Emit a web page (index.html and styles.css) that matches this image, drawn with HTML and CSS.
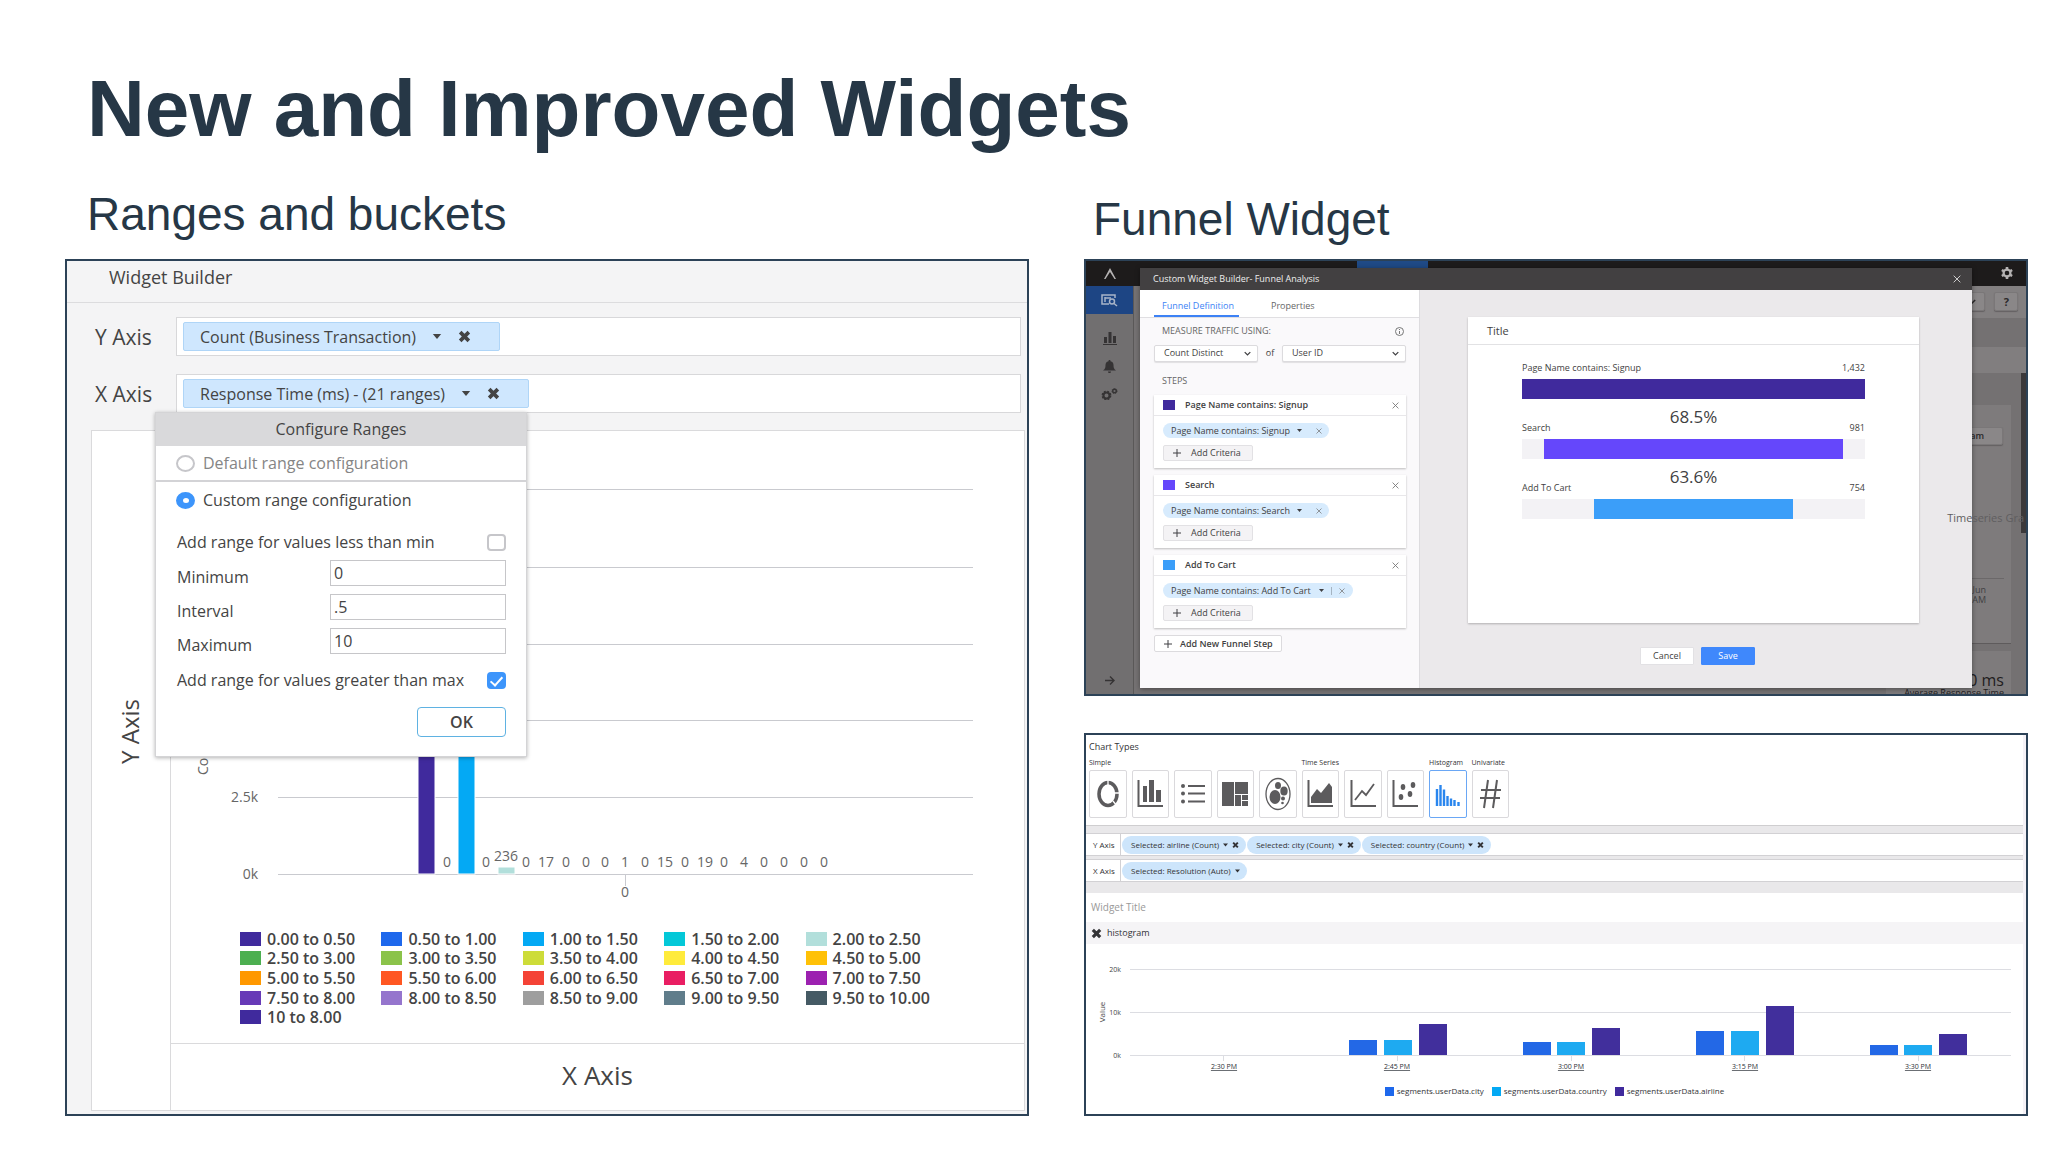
FILE: index.html
```html
<!DOCTYPE html>
<html lang="en">
<head>
  <meta charset="UTF-8">
  <meta name="viewport" content="width=device-width, initial-scale=1.0">
  <title>New and Improved Widgets</title>
  <link rel="stylesheet" href="styles.css">
</head>
<body>
  <!-- shared icons -->
  <svg class="sprite" width="0" height="0" aria-hidden="true">
    <symbol id="caret" viewBox="0 0 10 6"><path d="M0 0h10L5 6z" fill="currentColor"/></symbol>
    <symbol id="cross" viewBox="0 0 12 12"><path d="M2 2l8 8M10 2l-8 8" stroke="currentColor" stroke-width="3.4"/></symbol>
    <symbol id="thin-cross" viewBox="0 0 12 12"><path d="M1 1l10 10M11 1L1 11" stroke="currentColor" stroke-width="1.5"/></symbol>
    <symbol id="plus" viewBox="0 0 12 12"><path d="M6 0v12M0 6h12" stroke="currentColor" stroke-width="1.5"/></symbol>
    <symbol id="chevron" viewBox="0 0 10 6"><path d="M1 1l4 4 4-4" fill="none" stroke="currentColor" stroke-width="1.8"/></symbol>
    <symbol id="gear" viewBox="0 0 14 14"><circle cx="7" cy="7" r="4" fill="none" stroke="currentColor" stroke-width="2.6"/><path d="M7 0v3M7 11v3M1 3.500l2.600 1.500M10.400 9l2.600 1.500M1 10.500L3.600 9M10.400 5L13 3.500" stroke="currentColor" stroke-width="3"/></symbol>
  </svg>

  <main class="slide">
    <h1>New and Improved Widgets</h1>

    <div class="columns">
      <section class="column ranges">
        <h2>Ranges and buckets</h2>

        <div class="panel builder">
          <div class="builder-header">Widget Builder</div>
          <div class="axis-row">
            <span class="axis-label">Y Axis</span>
            <div class="axis-field">
              <div class="tag">Count (Business Transaction)
                <button class="icon-button" aria-label="Options"><svg class="caret"><use href="#caret"/></svg></button>
                <button class="icon-button" aria-label="Remove"><svg class="cross"><use href="#cross"/></svg></button>
              </div>
            </div>
          </div>
          <div class="axis-row">
            <span class="axis-label">X Axis</span>
            <div class="axis-field">
              <div class="tag">Response Time (ms) - (21 ranges)
                <button class="icon-button" aria-label="Options"><svg class="caret"><use href="#caret"/></svg></button>
                <button class="icon-button" aria-label="Remove"><svg class="cross"><use href="#cross"/></svg></button>
              </div>

              <form class="popup">
                <div class="popup-title">Configure Ranges</div>
                <div class="popup-option muted">
                  <input type="radio" name="range" id="range-default">
                  <label for="range-default">Default range configuration</label>
                </div>
                <div class="popup-option custom">
                  <input type="radio" name="range" id="range-custom" checked>
                  <label for="range-custom">Custom range configuration</label>
                </div>
                <div class="popup-fields">
                  <div class="popup-line">
                    <label for="less-min">Add range for values less than min</label>
                    <input type="checkbox" id="less-min">
                  </div>
                  <div class="popup-input">
                    <label for="minimum">Minimum</label>
                    <input type="text" id="minimum" value="0">
                  </div>
                  <div class="popup-input">
                    <label for="interval">Interval</label>
                    <input type="text" id="interval" value=".5">
                  </div>
                  <div class="popup-input">
                    <label for="maximum">Maximum</label>
                    <input type="text" id="maximum" value="10">
                  </div>
                  <div class="popup-line last">
                    <label for="greater-max">Add range for values greater than max</label>
                    <input type="checkbox" id="greater-max" checked>
                  </div>
                  <button type="button" class="ok-button">OK</button>
                </div>
              </form>
            </div>
          </div>

          <div class="chart-box">
            <div class="y-title"><span>Y Axis</span></div>
            <div class="chart-main">
              <svg class="range-chart" viewBox="0 0 853 494">
                <path class="grid-line" d="M107 58.500h695M107 136.500h695M107 213.500h695M107 289.500h695M107 366.500h695M107 443.500h695M454.500 444v11"/>
                <g class="bars">
                  <rect x="247" y="80" width="17" height="363" fill="#402a9d"/>
                  <rect x="287" y="80" width="17" height="363" fill="#04a9f4"/>
                  <rect x="327" y="436" width="17" height="7" fill="#b2dfdb"/>
                </g>
                <text x="87" y="371" text-anchor="end">2.5k</text>
                <text x="87" y="448" text-anchor="end">0k</text>
                <text transform="translate(37 344) rotate(-90)">Count</text>
                <g text-anchor="middle">
                  <text x="276" y="436">0</text>
                  <text x="315" y="436">0</text>
                  <text x="335" y="430">236</text>
                  <text x="355" y="436">0</text>
                  <text x="375" y="436">17</text>
                  <text x="395" y="436">0</text>
                  <text x="415" y="436">0</text>
                  <text x="434" y="436">0</text>
                  <text x="454" y="436">1</text>
                  <text x="474" y="436">0</text>
                  <text x="494" y="436">15</text>
                  <text x="514" y="436">0</text>
                  <text x="534" y="436">19</text>
                  <text x="553" y="436">0</text>
                  <text x="573" y="436">4</text>
                  <text x="593" y="436">0</text>
                  <text x="613" y="436">0</text>
                  <text x="633" y="436">0</text>
                  <text x="653" y="436">0</text>
                  <text x="454" y="466">0</text>
                </g>
              </svg>
              <ul class="range-legend">
                <li><i class="c-indigo"></i>0.00 to 0.50</li>
                <li><i class="c-blue"></i>0.50 to 1.00</li>
                <li><i class="c-sky"></i>1.00 to 1.50</li>
                <li><i class="c-cyan"></i>1.50 to 2.00</li>
                <li><i class="c-mint"></i>2.00 to 2.50</li>
                <li><i class="c-green"></i>2.50 to 3.00</li>
                <li><i class="c-light-green"></i>3.00 to 3.50</li>
                <li><i class="c-lime"></i>3.50 to 4.00</li>
                <li><i class="c-yellow"></i>4.00 to 4.50</li>
                <li><i class="c-amber"></i>4.50 to 5.00</li>
                <li><i class="c-orange"></i>5.00 to 5.50</li>
                <li><i class="c-deep-orange"></i>5.50 to 6.00</li>
                <li><i class="c-red"></i>6.00 to 6.50</li>
                <li><i class="c-pink"></i>6.50 to 7.00</li>
                <li><i class="c-purple"></i>7.00 to 7.50</li>
                <li><i class="c-violet"></i>7.50 to 8.00</li>
                <li><i class="c-lilac"></i>8.00 to 8.50</li>
                <li><i class="c-gray"></i>8.50 to 9.00</li>
                <li><i class="c-slate"></i>9.00 to 9.50</li>
                <li><i class="c-dark-slate"></i>9.50 to 10.00</li>
                <li><i class="c-indigo"></i>10 to 8.00</li>
              </ul>
              <div class="x-title"><span>X Axis</span></div>
            </div>
          </div>
        </div>
      </section>

      <section class="column funnel">
        <h2>Funnel Widget</h2>

        <div class="panel screen">
          <div class="app">
            <div class="app-bar">
              <svg class="logo" viewBox="0 0 14 12"><path d="M7 0l6 11-1.500 0L7 4 2.500 11H1z" fill="#b5b3b3"/></svg>
              <span class="app-tab"></span>
              <svg class="app-gear"><use href="#gear"/></svg>
            </div>
            <div class="app-body">
              <nav class="side">
                <a href="#" class="side-item active" aria-label="Explore">
                  <svg width="18" height="13" viewBox="0 0 18 13"><path d="M8 10H1V1h13v3M4 3v5M4 4h6" fill="none" stroke="currentColor" stroke-width="1.500"/><circle cx="11" cy="7.500" r="2.500" fill="none" stroke="currentColor" stroke-width="1.500"/><path d="M13 9.500l3 2.500" stroke="currentColor" stroke-width="1.500"/></svg>
                </a>
                <a href="#" class="side-item" aria-label="Dashboards">
                  <svg width="14" height="13" viewBox="0 0 14 13"><path d="M1 5h3v6H1zM5.500 0h3v11h-3zM10 4h3v7h-3zM0 12h14v1H0z" fill="currentColor"/></svg>
                </a>
                <a href="#" class="side-item" aria-label="Alerts">
                  <svg width="13" height="13" viewBox="0 0 13 13"><path d="M6.500 0c.8 0 1 .5 1 1.200C9.500 1.600 10.500 3 10.500 5c0 3 .5 4 2.500 5.500H0C2 9 2.500 8 2.500 5c0-2 1-3.400 3-3.800 0-.7.2-1.200 1-1.200zM5 11.500h3c0 1-.7 1.500-1.500 1.500S5 12.500 5 11.500z" fill="currentColor"/></svg>
                </a>
                <a href="#" class="side-item" aria-label="Settings">
                  <svg width="17" height="12" viewBox="0 0 17 12"><circle cx="5.500" cy="7.500" r="3" fill="none" stroke="currentColor" stroke-width="2"/><circle cx="5.500" cy="7.500" r="4.300" fill="none" stroke="currentColor" stroke-width="1.200" stroke-dasharray="2 1.400"/><circle cx="13.500" cy="3" r="1.800" fill="none" stroke="currentColor" stroke-width="1.400"/><circle cx="13.500" cy="3" r="2.600" fill="none" stroke="currentColor" stroke-width=".8" stroke-dasharray="1.200 1"/></svg>
                </a>
                <a href="#" class="side-item bottom" aria-label="Expand">
                  <svg width="10" height="9" viewBox="0 0 10 9"><path d="M0 4.500h9M5 .5l4 4-4 4" fill="none" stroke="currentColor" stroke-width="1.400"/></svg>
                </a>
              </nav>
              <div class="page">
                <div class="page-tools">
                  <button class="page-button" aria-label="More"><svg class="chevron"><use href="#chevron"/></svg></button>
                  <button class="page-button help">?</button>
                </div>
                <div class="page-strip"></div>
                <div class="page-strip light"></div>
                <div class="page-cards">
                  <div class="page-card top"><button class="page-button wide">am</button></div>
                  <div class="page-card middle"><div class="page-date">Jun<br>AM</div></div>
                  <div class="page-card metric"><b>0 ms</b><span>Average Response Time</span></div>
                  <span class="scrollbar"></span>
                </div>
              </div>
            </div>
          </div>

          <div class="modal">
            <div class="modal-header">
              <span>Custom Widget Builder- Funnel Analysis</span>
              <button class="icon-button" aria-label="Close"><svg class="close"><use href="#thin-cross"/></svg></button>
            </div>
            <div class="modal-body">
              <div class="definition">
                <div class="tabs">
                  <a href="#" class="tab active">Funnel Definition</a>
                  <a href="#" class="tab">Properties</a>
                </div>
                <div class="definition-body">
                  <div class="caption">
                    <span>MEASURE TRAFFIC USING:</span>
                    <svg width="9" height="9" viewBox="0 0 9 9"><circle cx="4.500" cy="4.500" r="4" fill="none" stroke="#777"/><path d="M4.500 2v1M4.500 4v3" stroke="#777"/></svg>
                  </div>
                  <div class="measure">
                    <span class="select count"><select aria-label="Measure"><option>Count Distinct</option></select><svg class="chevron"><use href="#chevron"/></svg></span>
                    <span>of</span>
                    <span class="select user"><select aria-label="Field"><option>User ID</option></select><svg class="chevron"><use href="#chevron"/></svg></span>
                  </div>
                  <div class="caption steps">STEPS</div>

                  <div class="step">
                    <div class="step-head">
                      <i class="c-indigo"></i><span>Page Name contains: Signup</span>
                      <button class="icon-button" aria-label="Remove step"><svg class="close"><use href="#thin-cross"/></svg></button>
                    </div>
                    <div class="step-body">
                      <div class="pill">Page Name contains: Signup
                        <svg class="caret"><use href="#caret"/></svg><span class="bar"></span><svg class="close"><use href="#thin-cross"/></svg>
                      </div>
                      <button class="add"><svg class="plus"><use href="#plus"/></svg>Add Criteria</button>
                    </div>
                  </div>
                  <div class="step">
                    <div class="step-head">
                      <i class="c-iris"></i><span>Search</span>
                      <button class="icon-button" aria-label="Remove step"><svg class="close"><use href="#thin-cross"/></svg></button>
                    </div>
                    <div class="step-body">
                      <div class="pill">Page Name contains: Search
                        <svg class="caret"><use href="#caret"/></svg><span class="bar"></span><svg class="close"><use href="#thin-cross"/></svg>
                      </div>
                      <button class="add"><svg class="plus"><use href="#plus"/></svg>Add Criteria</button>
                    </div>
                  </div>
                  <div class="step">
                    <div class="step-head">
                      <i class="c-azure"></i><span>Add To Cart</span>
                      <button class="icon-button" aria-label="Remove step"><svg class="close"><use href="#thin-cross"/></svg></button>
                    </div>
                    <div class="step-body">
                      <div class="pill long">Page Name contains: Add To Cart
                        <svg class="caret"><use href="#caret"/></svg><span class="bar"></span><svg class="close"><use href="#thin-cross"/></svg>
                      </div>
                      <button class="add"><svg class="plus"><use href="#plus"/></svg>Add Criteria</button>
                    </div>
                  </div>
                  <button class="add new"><svg class="plus"><use href="#plus"/></svg>Add New Funnel Step</button>
                </div>
              </div>

              <div class="preview">
                <div class="preview-card">
                  <div class="preview-title">Title</div>
                  <div class="funnel-chart">
                    <div class="funnel-row first"><span>Page Name contains: Signup</span><b></b><span class="value">1,432</span></div>
                    <div class="track"><div class="fill c-indigo" style="width: 100%"></div></div>
                    <div class="funnel-row"><span>Search</span><b>68.5%</b><span class="value">981</span></div>
                    <div class="track"><div class="fill c-iris" style="width: 87%"></div></div>
                    <div class="funnel-row"><span>Add To Cart</span><b>63.6%</b><span class="value">754</span></div>
                    <div class="track"><div class="fill c-azure" style="width: 58%"></div></div>
                  </div>
                </div>
                <div class="actions">
                  <button class="cancel">Cancel</button>
                  <button class="save">Save</button>
                </div>
              </div>
            </div>
          </div>
          <span class="ghost">Timeseries Gra</span>
        </div>

        <div class="panel histogram">
          <div class="types">
            <div class="types-title">Chart Types</div>
            <div class="types-grid">
              <span class="group six">Simple</span>
              <span class="group three">Time Series</span>
              <span class="group">Histogram</span>
              <span class="group">Univariate</span>
              <button class="type" aria-label="Donut"><svg viewBox="0 0 28 36"><ellipse cx="14" cy="18" rx="9" ry="11.500" fill="none" stroke="currentColor" stroke-width="3.500"/><path d="M14 2v7M20 17h6M19 25l4 5" stroke="#fff" stroke-width="1.300"/></svg></button>
              <button class="type" aria-label="Bar"><svg viewBox="0 0 28 36"><path d="M2.500 4v26H27" fill="none" stroke="currentColor" stroke-width="2"/><path d="M7 10h4v16H7zM13 4h5v22h-5zM20 14h5v12h-5z" fill="currentColor"/></svg></button>
              <button class="type" aria-label="List"><svg viewBox="0 0 28 36"><path d="M9 10h17M9 17.500h17M9 25.500h17" stroke="currentColor" stroke-width="2.200"/><circle cx="4" cy="10" r="2" fill="currentColor"/><circle cx="4" cy="17.500" r="2" fill="currentColor"/><circle cx="4" cy="25.500" r="2" fill="currentColor"/></svg></button>
              <button class="type" aria-label="Tree map"><svg viewBox="0 0 28 36"><path d="M1 6h12v24H1zM14 6h13v12H14zM14 19h6v11h-6zM21 19h6v5h-6zM21 25h6v5h-6z" fill="currentColor"/></svg></button>
              <button class="type" aria-label="Bubble"><svg viewBox="0 0 28 36"><ellipse cx="14" cy="18" rx="12" ry="15.500" fill="none" stroke="currentColor" stroke-width="1.300"/><g fill="currentColor"><ellipse cx="11" cy="21" rx="5.500" ry="7"/><ellipse cx="14" cy="9.500" rx="3" ry="3.500"/><ellipse cx="20" cy="15" rx="3.700" ry="4.500"/><circle cx="19" cy="22.500" r="2"/><circle cx="18.500" cy="27" r="1.300"/></g></svg></button>
              <button class="type" aria-label="Area"><svg viewBox="0 0 28 36"><path d="M2.500 4v26H27" fill="none" stroke="currentColor" stroke-width="2"/><path d="M5 27v-6l6-8 4 4 8-10 3 4v16z" fill="currentColor"/></svg></button>
              <button class="type" aria-label="Line"><svg viewBox="0 0 28 36"><path d="M2.500 4v26H27" fill="none" stroke="currentColor" stroke-width="2"/><path d="M6 24l7-9 4 4 8-11" fill="none" stroke="currentColor" stroke-width="1.800"/></svg></button>
              <button class="type" aria-label="Scatter"><svg viewBox="0 0 28 36"><path d="M2.500 4v26H27" fill="none" stroke="currentColor" stroke-width="2"/><g fill="currentColor"><ellipse cx="12" cy="11" rx="2.300" ry="3"/><ellipse cx="22" cy="9" rx="2.300" ry="3"/><ellipse cx="19" cy="18" rx="2.300" ry="3"/><ellipse cx="10" cy="21" rx="2.300" ry="3"/></g></svg></button>
              <button class="type active" aria-label="Histogram"><svg viewBox="0 0 28 36"><path d="M3 13v17M6.500 9v21M10 13.500v16.500M13.500 20v10M17 22.500v7.500M20.500 24v6M24.500 26v4" stroke="currentColor" stroke-width="2.400"/></svg></button>
              <button class="type" aria-label="Numeric"><svg viewBox="0 0 28 36"><path d="M12 4L8 32M21 4l-4 28M5 14h20M4 22h20" stroke="currentColor" stroke-width="2"/></svg></button>
            </div>
          </div>

          <div class="query">
            <div class="query-row">
              <span class="query-label">Y Axis</span>
              <div class="query-chip">Selected: airline (Count) <svg class="caret"><use href="#caret"/></svg><svg class="cross"><use href="#cross"/></svg></div>
              <div class="query-chip">Selected: city (Count) <svg class="caret"><use href="#caret"/></svg><svg class="cross"><use href="#cross"/></svg></div>
              <div class="query-chip">Selected: country (Count) <svg class="caret"><use href="#caret"/></svg><svg class="cross"><use href="#cross"/></svg></div>
            </div>
            <div class="query-row">
              <span class="query-label">X Axis</span>
              <div class="query-chip">Selected: Resolution (Auto) <svg class="caret"><use href="#caret"/></svg></div>
            </div>
          </div>

          <div class="widget-title">Widget Title</div>
          <div class="widget-name"><svg class="cross"><use href="#cross"/></svg>histogram</div>

          <svg class="histogram-chart" viewBox="0 0 940 134">
            <path class="grid-line" d="M44 25.500h881M44 68.500h881M44 111.500h881M137.500 112v5M311.500 112v5M485.500 112v5M658.500 112v5M832.500 112v5"/>
            <g fill="#2368e6">
              <rect x="263" y="96" width="28" height="15"/>
              <rect x="437" y="98" width="28" height="13"/>
              <rect x="610" y="87" width="28" height="24"/>
              <rect x="784" y="101" width="28" height="10"/>
            </g>
            <g fill="#1eaaf1">
              <rect x="298" y="96" width="28" height="15"/>
              <rect x="471" y="98" width="28" height="13"/>
              <rect x="645" y="87" width="28" height="24"/>
              <rect x="818" y="101" width="28" height="10"/>
            </g>
            <g fill="#412f9c">
              <rect x="333" y="80" width="28" height="31"/>
              <rect x="506" y="84" width="28" height="27"/>
              <rect x="680" y="62" width="28" height="49"/>
              <rect x="853" y="90" width="28" height="21"/>
            </g>
            <g text-anchor="end">
              <text x="35" y="28">20k</text>
              <text x="35" y="71">10k</text>
              <text x="35" y="114">0k</text>
            </g>
            <text class="value-title" text-anchor="middle" transform="translate(19 68) rotate(-90)">Value</text>
            <g class="times" text-anchor="middle">
              <text x="138" y="125">2:30 PM</text>
              <text x="311" y="125">2:45 PM</text>
              <text x="485" y="125">3:00 PM</text>
              <text x="659" y="125">3:15 PM</text>
              <text x="832" y="125">3:30 PM</text>
            </g>
          </svg>
          <ul class="histogram-legend">
            <li><i class="c-blue"></i>segments.userData.city</li>
            <li><i class="c-sky"></i>segments.userData.country</li>
            <li><i class="c-indigo"></i>segments.userData.airline</li>
          </ul>
        </div>
      </section>
    </div>
  </main>
</body>
</html>
```
FILE: styles.css
```css
* {
  box-sizing: border-box;
}

body {
  margin: 0;
  background: #fff;
  color: #263746;
  font-family: "Open Sans", sans-serif;
}

button,
input,
select {
  font: inherit;
  color: inherit;
  margin: 0;
}

ul {
  list-style: none;
  margin: 0;
  padding: 0;
}

svg {
  display: block;
  flex: none;
}

.sprite {
  position: absolute;
}

.slide {
  padding: 63px 20px 36px 65px;
}

h1,
h2 {
  font-family: "Liberation Sans", Arial, sans-serif;
  color: #263746;
}

h1 {
  margin: 0 0 0 22px;
  font-size: 80px;
  line-height: 92px;
}

h2 {
  font-size: 46px;
  font-weight: normal;
  line-height: 52px;
}

.ranges h2 {
  margin: 33px 0 19px 22px;
}

.funnel h2 {
  margin: 38px 0 14px 9px;
}

.columns {
  display: grid;
  grid-template-columns: 964fr 944fr;
  gap: 55px;
}

.panel {
  border: 2px solid #2c4257;
}

.icon-button {
  display: flex;
  padding: 0;
  border: 0;
  background: none;
}

/* swatch colours */
.c-indigo { background: #402a9d; }
.c-blue { background: #1e68ec; }
.c-sky { background: #04a9f4; }
.c-cyan { background: #04c8d8; }
.c-mint { background: #b2dfdb; }
.c-green { background: #4caf50; }
.c-light-green { background: #8bc34a; }
.c-lime { background: #cddc39; }
.c-yellow { background: #ffeb3b; }
.c-amber { background: #ffc107; }
.c-orange { background: #ff9800; }
.c-deep-orange { background: #ff5722; }
.c-red { background: #f44336; }
.c-pink { background: #e91e63; }
.c-purple { background: #9c21b0; }
.c-violet { background: #673ab7; }
.c-lilac { background: #9575cd; }
.c-gray { background: #9e9e9e; }
.c-slate { background: #607d8b; }
.c-dark-slate { background: #455a64; }
.c-iris { background: #6547fb; }
.c-azure { background: #3b9ef9; }

/* widget builder */
.builder {
  background: #f4f4f5;
  color: #444;
  font-size: 16px;
  padding-bottom: 3px;
}

.builder-header {
  height: 42px;
  padding-left: 42px;
  margin-bottom: 14px;
  border-bottom: 1px solid #dcdcde;
  font-size: 18px;
  line-height: 32px;
}

.axis-row {
  display: flex;
  align-items: center;
  padding: 0 6px 0 28px;
  margin-bottom: 18px;
}

.axis-label {
  width: 81px;
  font-size: 21px;
  line-height: 28px;
}

.axis-field {
  position: relative;
  flex: 1;
  display: flex;
  padding: 4px 6px;
  height: 39px;
  border: 1px solid #d8d8da;
  background: #fff;
}

.tag {
  display: flex;
  align-items: center;
  gap: 16px;
  padding: 0 28px 0 16px;
  border: 1px solid #afd5f7;
  border-radius: 2px;
  background: #cfe7fe;
  line-height: 28px;
}

.tag .caret {
  width: 10px;
  height: 5px;
}

.tag .cross {
  width: 13px;
  height: 13px;
}

.popup {
  position: absolute;
  z-index: 2;
  top: 37px;
  left: -22px;
  width: 372px;
  background: #fff;
  border: 1px solid #d4d4d6;
  box-shadow: 0 1px 4px rgba(0, 0, 0, .3);
}

.popup-title {
  background: #d9d9db;
  line-height: 33px;
  text-align: center;
}

.popup-option {
  display: flex;
  align-items: center;
  gap: 8px;
  height: 36px;
  padding-left: 20px;
}

.muted {
  color: #858585;
  border-bottom: 2px solid #d3d3d6;
}

.popup input[type="radio"],
.popup input[type="checkbox"] {
  appearance: none;
  flex: none;
  display: grid;
  place-items: center;
  width: 19px;
  height: 17px;
  border: 2px solid #c6c6ca;
  background: #fff;
}

.popup input[type="radio"] {
  border-radius: 50%;
}

.popup input[type="checkbox"] {
  border-radius: 4px;
}

.popup input[type="radio"]:checked,
.popup input[type="checkbox"]:checked {
  border-color: #3d95fb;
  background: #3d95fb;
}

.popup input[type="radio"]:checked::after {
  content: "";
  width: 6px;
  height: 5px;
  border-radius: 50%;
  background: #fff;
}

.popup input[type="checkbox"]:checked::after {
  content: "";
  width: 5px;
  height: 10px;
  margin-bottom: 3px;
  border: solid #fff;
  border-width: 0 2px 2px 0;
  transform: rotate(42deg);
}

.popup-fields {
  padding: 11px 20px 19px 21px;
}

.popup-line {
  display: flex;
  align-items: center;
  justify-content: space-between;
  height: 26px;
  margin-bottom: 5px;
}

.popup-input {
  display: flex;
  justify-content: space-between;
  height: 26px;
  margin-bottom: 8px;
}

.popup-input label {
  line-height: 34px;
}

.popup-input input {
  width: 176px;
  padding: 0 3px;
  border: 1px solid #c6c6c9;
}

.popup-line.last {
  margin: 13px 0 14px;
}

.ok-button {
  display: block;
  width: 89px;
  height: 30px;
  margin-left: auto;
  border: 1px solid #5fb2e2;
  border-radius: 4px;
  background: #fff;
  font-weight: 600;
  line-height: 26px;
}

.chart-box {
  display: flex;
  margin: -1px 2px 0 24px;
  border: 1px solid #dadadc;
  background: #fff;
}

.y-title {
  display: grid;
  place-items: center;
  width: 79px;
  padding-right: 3px;
  border-right: 1px solid #dadadc;
  font-size: 24px;
}

.y-title span {
  writing-mode: vertical-rl;
  transform: rotate(180deg);
  margin-bottom: 78px;
}

.chart-main {
  flex: 1;
}

.range-chart {
  width: 100%;
  height: auto;
  font-size: 14px;
  fill: #666;
}

.grid-line {
  fill: none;
  stroke: #c9cacf;
}

.bars rect {
  stroke: #fff;
}

.range-legend {
  display: grid;
  grid-template-columns: repeat(5, 1fr);
  grid-template-rows: repeat(5, 1fr);
  height: 118px;
  padding: 4px 77px 16px 69px;
  font-weight: 600;
  line-height: 18px;
}

.range-legend li {
  display: flex;
  align-items: center;
  gap: 6px;
}

.range-legend i {
  width: 21px;
  height: 14px;
}

.x-title {
  height: 67px;
  border-top: 1px solid #dadadc;
  font-size: 26px;
  line-height: 62px;
  text-align: center;
}

/* funnel screen */
.screen {
  position: relative;
  display: grid;
  overflow: hidden;
  margin-bottom: 37px;
  font-size: 9px;
  line-height: 14px;
  color: #3f3f42;
  background: #757273;
}

.app,
.modal {
  grid-area: 1 / 1;
}

.app {
  display: flex;
  flex-direction: column;
}

.app-bar {
  display: flex;
  justify-content: space-between;
  align-items: flex-start;
  height: 25px;
  padding: 0 13px 0 17px;
  background: #1d1b1b;
}

.logo {
  width: 14px;
  height: 12px;
  margin-top: 7px;
}

.app-tab {
  width: 71px;
  height: 25px;
  margin-right: 344px;
  margin-left: 11px;
  background: #1f4a86;
}

.app-gear {
  width: 12px;
  height: 12px;
  margin-top: 6px;
  color: #b5b3b3;
}

.app-body {
  flex: 1;
  display: flex;
  justify-content: space-between;
}

.side {
  display: flex;
  flex-direction: column;
  width: 48px;
  border-right: 1px solid #5a5858;
  background: #716f70;
}

.side-item {
  display: grid;
  place-items: center;
  height: 28px;
  color: #353334;
}

.side-item.active {
  margin-bottom: 10px;
  background: #1d4584;
  color: #a8b4c8;
}

.side-item.bottom {
  margin: auto 0 0;
}

.page {
  display: flex;
  flex-direction: column;
  width: 140px;
}

.page-tools {
  display: flex;
  justify-content: flex-end;
  gap: 9px;
  height: 32px;
  padding: 6px 8px 0 0;
  background: #827f80;
}

.page-button {
  display: flex;
  align-items: center;
  justify-content: flex-end;
  width: 24px;
  height: 19px;
  padding: 0 8px;
  border: 1px solid #7a7778;
  border-radius: 2px;
  background: #8a8788;
  box-shadow: 0 1px 1px #646162;
  color: #2b292a;
}

.page-button .chevron {
  width: 8px;
  height: 5px;
}

.page-button.help {
  font-size: 11px;
  font-weight: 700;
}

.page-button.wide {
  width: 60px;
  height: 18px;
  padding: 0 18px;
  font-weight: 600;
}

.page-strip {
  height: 29px;
  background: #747172;
}

.page-strip.light {
  height: 26px;
  background: #817e7f;
}

.page-cards {
  position: relative;
  flex: 1;
  display: flex;
  flex-direction: column;
  gap: 7px;
  padding: 32px 15px 0 0;
  background: #747172;
}

.page-card {
  background: #7e7b7c;
}

.page-card.top {
  display: flex;
  justify-content: flex-end;
  height: 54px;
  padding: 22px 8px 0 0;
}

.page-card.middle {
  height: 185px;
  margin-top: -7px;
  border-bottom: 1px solid #5e5b5c;
  padding: 119px 7px 0 0;
}

.page-date {
  border-top: 1px solid #6b6869;
  padding: 6px 18px 0 0;
  line-height: 10px;
  text-align: right;
}

.page-card.metric {
  display: flex;
  flex-direction: column;
  align-items: flex-end;
  height: 43px;
  padding: 20px 7px 0 0;
  color: #1f1d1e;
}

.metric b {
  font-size: 16px;
  font-weight: 400;
  line-height: 18px;
}

.metric span {
  line-height: 8px;
  white-space: nowrap;
}

.scrollbar {
  position: absolute;
  top: 0;
  right: 0;
  width: 5px;
  height: 160px;
  background: #3c393a;
}

.ghost {
  position: absolute;
  top: 250px;
  right: 2px;
  font-size: 11px;
  white-space: nowrap;
  color: #605e60;
}

.modal {
  position: relative;
  display: flex;
  flex-direction: column;
  margin: 7px 54px 6px;
  box-shadow: 0 1px 5px rgba(0, 0, 0, .4);
}

.modal-header {
  display: flex;
  align-items: center;
  justify-content: space-between;
  height: 22px;
  padding: 0 11px 0 13px;
  background: #424041;
  color: #eee;
}

.close {
  width: 7px;
  height: 7px;
  color: #777;
}

.modal-header .close {
  width: 8px;
  height: 8px;
  color: #ccc;
}

.modal-body {
  flex: 1;
  display: flex;
}

.definition {
  width: 280px;
  border-right: 1px solid #dddcdf;
  background: #faf9fb;
}

.tabs {
  display: flex;
  gap: 24px;
  height: 28px;
  padding-left: 14px;
  border-bottom: 1px solid #e0dfe2;
  background: #fff;
}

.tab {
  padding: 0 8px;
  line-height: 31px;
  color: #666;
  text-decoration: none;
}

.tab.active {
  padding: 0 5px 0 8px;
  border-bottom: 2px solid #3d82f5;
  color: #3d82f5;
}

.definition-body {
  padding: 5px 13px 34px 14px;
}

.caption {
  display: flex;
  align-items: center;
  justify-content: space-between;
  height: 16px;
  margin-bottom: 6px;
  padding: 0 2px 0 8px;
  color: #666;
}

.measure {
  display: flex;
  justify-content: space-between;
  align-items: center;
  height: 16px;
  margin-bottom: 12px;
}

.select {
  display: grid;
  align-items: center;
}

.select.count {
  width: 104px;
}

.select.user {
  width: 124px;
}

.select select {
  grid-area: 1 / 1;
  appearance: none;
  height: 17px;
  padding: 0 9px;
  border: 1px solid #dcdbde;
  border-radius: 2px;
  background: #fff;
  box-shadow: 0 1px 1px rgba(0, 0, 0, .1);
}

.select .chevron {
  grid-area: 1 / 1;
  justify-self: end;
  width: 7px;
  height: 5px;
  margin-right: 7px;
  pointer-events: none;
}

.step {
  margin-bottom: 7px;
  background: #fff;
  box-shadow: 0 1px 2px rgba(0, 0, 0, .25);
}

.step-head {
  display: flex;
  align-items: center;
  gap: 10px;
  height: 21px;
  padding: 0 7px 0 9px;
  border-bottom: 1px solid #e8e7ea;
  font-weight: 600;
}

.step-head i {
  width: 12px;
  height: 10px;
}

.step-head .icon-button {
  margin-left: auto;
}

.step-body {
  padding: 7px 9px;
}

.pill {
  display: flex;
  align-items: center;
  gap: 7px;
  width: 166px;
  height: 15px;
  margin-bottom: 7px;
  padding: 0 8px;
  border-radius: 8px;
  background: #d7ebfd;
  white-space: nowrap;
}

.pill.long {
  width: 190px;
}

.pill .caret {
  width: 5px;
  height: 3px;
  margin-left: auto;
}

.pill .bar {
  width: 1px;
  height: 8px;
  background: #a5b4c2;
}

.pill .close {
  width: 6px;
  height: 6px;
}

.add {
  display: flex;
  align-items: center;
  gap: 10px;
  height: 16px;
  padding: 0 11px 0 9px;
  border: 1px solid #e2e1e4;
  border-radius: 2px;
  background: #f4f3f5;
}

.add.new {
  gap: 8px;
  height: 17px;
  padding: 0 8px 0 9px;
  border-color: #dcdbde;
  background: #fff;
  font-weight: 600;
}

.plus {
  width: 8px;
  height: 8px;
}

.preview {
  flex: 1;
  padding: 27px 53px 0 48px;
  background: #ebe9eb;
}

.preview-card {
  height: 306px;
  background: #fff;
  box-shadow: 0 1px 2px rgba(0, 0, 0, .25);
}

.preview-title {
  height: 28px;
  padding-left: 19px;
  border-bottom: 1px solid #e2e2e4;
  font-size: 11px;
  line-height: 27px;
}

.funnel-chart {
  padding: 0 54px;
}

.funnel-row {
  display: grid;
  grid-template-columns: 1fr auto 1fr;
  align-items: end;
  height: 40px;
  padding-bottom: 4px;
}

.funnel-row.first {
  height: 34px;
}

.funnel-row b {
  align-self: start;
  padding-top: 8px;
  font-size: 17px;
  font-weight: 400;
  line-height: 20px;
}

.value {
  text-align: right;
}

.track {
  background: #f3f2f5;
}

.fill {
  height: 20px;
  margin: 0 auto;
}

.actions {
  display: flex;
  justify-content: center;
  gap: 7px;
  padding: 24px 0 0 8px;
}

.cancel,
.save {
  width: 54px;
  height: 18px;
  padding: 0;
  border: 1px solid #e2e1e4;
  border-radius: 1px;
  background: #fff;
  line-height: 14px;
}

.save {
  border-color: #3f88fc;
  background: #3f88fc;
  color: #fff;
}

/* histogram panel */
.histogram {
  padding-right: 3px;
  background: linear-gradient(#f5f2f7, #f5f2f7) right / 3px 100% no-repeat #fff;
  color: #333336;
  font-size: 8px;
  line-height: 12px;
}

.types {
  height: 91px;
  padding: 4px 3px 0;
  border-bottom: 1px solid #cfced0;
}

.types-title {
  font-size: 9px;
  line-height: 15px;
}

.types-grid {
  display: grid;
  grid-template-columns: repeat(10, 1fr);
  column-gap: 5px;
  width: 420px;
  margin-top: 2px;
}

.group {
  line-height: 14px;
  font-size: 7px;
}

.group.six {
  grid-column: span 5;
}

.group.three {
  grid-column: span 3;
}

.type {
  height: 48px;
  padding: 0;
  border: 1px solid #dad9dc;
  border-radius: 2px;
  background: #fff;
  color: #5c5b5d;
}

.type svg {
  width: 28px;
  height: 36px;
  margin: 0 auto;
}

.type.active {
  border-color: #6aa7f5;
  color: #2a86ee;
}

.query {
  display: flex;
  flex-direction: column;
  gap: 3px;
  padding: 7px 0 11px;
  background: #e9e8ea;
}

.query-row {
  display: flex;
  gap: 1px;
  align-items: center;
  height: 23px;
  border: solid #d2d1d4;
  border-width: 1px 0;
  background: #fff;
}

.query-label {
  width: 35px;
  padding-left: 7px;
  border-right: 1px solid #d2d1d4;
  line-height: 21px;
}

.query-chip {
  display: flex;
  align-items: center;
  gap: 4px;
  height: 18px;
  padding: 0 7px 0 9px;
  border-radius: 9px;
  background: #cde5fb;
}

.query-chip .caret {
  width: 5px;
  height: 4px;
}

.query-chip .cross {
  width: 7px;
  height: 8px;
}

.widget-title {
  padding-left: 5px;
  font-size: 10px;
  line-height: 29px;
  color: #999;
}

.widget-name {
  display: flex;
  align-items: center;
  gap: 5px;
  height: 22px;
  padding-left: 5px;
  background: #f5f4f6;
  font-size: 9px;
}

.widget-name .cross {
  width: 11px;
  height: 13px;
}

.histogram-chart {
  width: calc(100% + 3px);
  height: auto;
  font-size: 7px;
  fill: #444;
}

.histogram-chart .grid-line {
  stroke: #dcdde2;
}

.times {
  fill: #2c3138;
  text-decoration: underline;
}

.value-title {
  font-size: 8px;
}

.histogram-legend {
  display: flex;
  justify-content: center;
  gap: 8px;
  padding: 7px 0 17px;
}

.histogram-legend li {
  display: flex;
  align-items: center;
  gap: 3px;
}

.histogram-legend i {
  width: 9px;
  height: 9px;
}
```
